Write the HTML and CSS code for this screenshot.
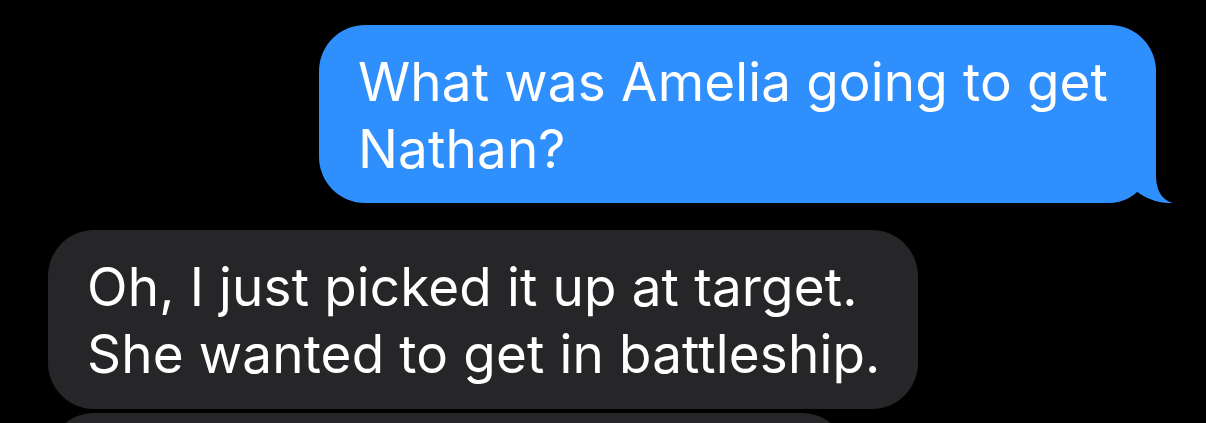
FILE: index.html
```html
<!DOCTYPE html>
<html lang="en">
<head>
<meta charset="utf-8">
<title>Messages</title>
<link rel="stylesheet" href="styles.css">
</head>
<body>
<div class="thread">
  <div class="bubble sent">
    <p class="msg-text">What was Amelia going to get Nathan?</p>
    <svg class="tail" width="70" height="54" viewBox="0 0 70 54" aria-hidden="true">
      <path d="M0 0 H51 V28 C51.5 44 59 52 68 54 C54 54.5 41 50 32 42.5 C25 50 15 54 3 54 H0 Z" fill="#2F8FFD"/>
    </svg>
  </div>
  <div class="bubble received first">
    <p class="msg-text">Oh, I just picked it up at target. She wanted to get in battleship.</p>
  </div>
  <div class="bubble received next">
    <p class="msg-text">&nbsp;</p>
  </div>
</div>
</body>
</html>
```
FILE: styles.css
```css
html, body {
  margin: 0;
  padding: 0;
  background: #000;
  overflow: hidden;
  height: 100%;
}

.thread {
  display: flex;
  flex-direction: column;
  padding-top: 25px;
  font-family: Inter, "Liberation Sans", sans-serif;
}

.bubble {
  position: relative;
  box-sizing: border-box;
  border-radius: 46px;
  padding: 24px 30px 21px 39px;
  color: #fff;
}

.msg-text {
  margin: 0;
  font-size: 53px;
  letter-spacing: 0.15px;
  line-height: 66.7px;
  font-weight: 400;
}

.sent {
  align-self: flex-end;
  margin-right: 50px;
  max-width: 837px;
  background: #2F8FFD;
  border-bottom-right-radius: 50px;
}

.tail {
  position: absolute;
  right: -19px;
  bottom: 0;
  display: block;
}

.received {
  align-self: flex-start;
  margin-left: 48px;
  background: #262628;
}

.first {
  margin-top: 27px;
  max-width: 870px;
}

.next {
  margin-top: 4px;
  width: 800px;
}
```
